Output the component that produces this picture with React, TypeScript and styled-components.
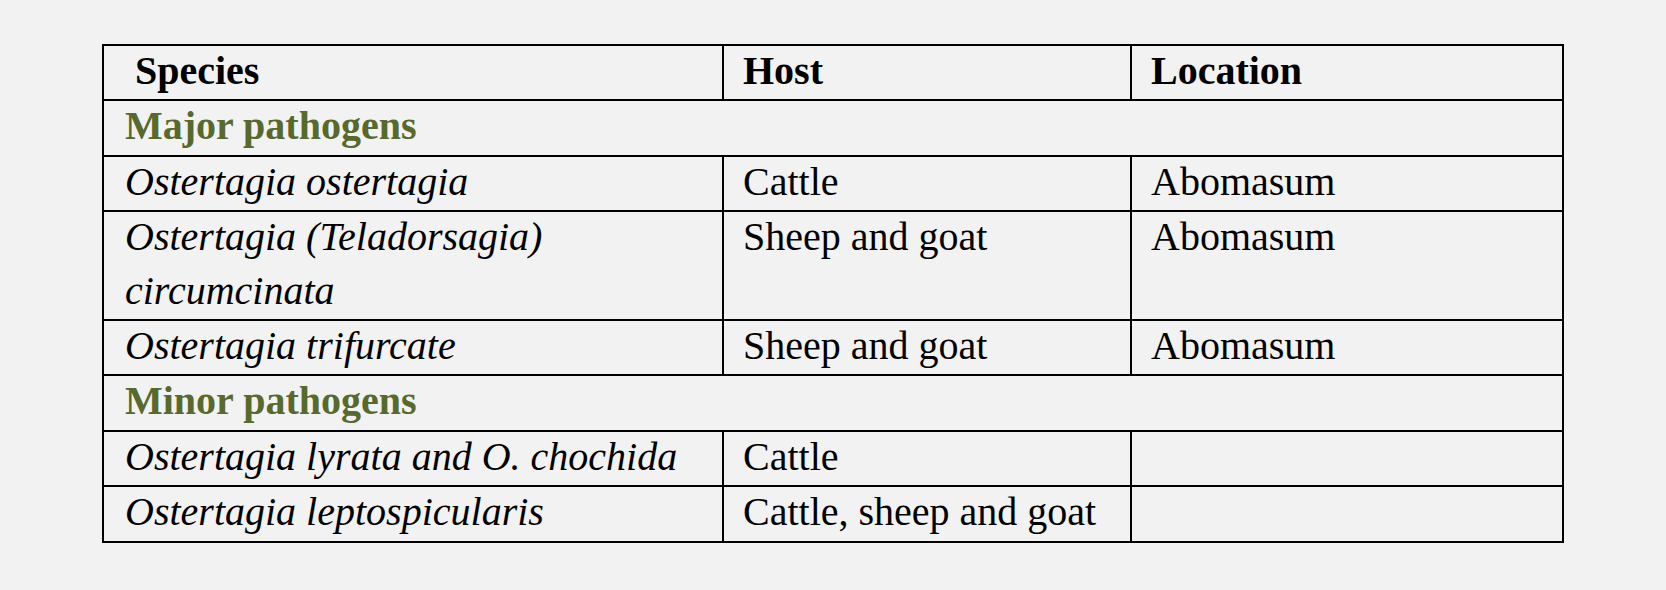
import styled, { createGlobalStyle } from 'styled-components';

interface SpeciesRow {
  species: string;
  host: string;
  location: string;
}

interface Section {
  title: string;
  rows: SpeciesRow[];
}

const sections: Section[] = [
  {
    title: 'Major pathogens',
    rows: [
      { species: 'Ostertagia ostertagia', host: 'Cattle', location: 'Abomasum' },
      { species: 'Ostertagia (Teladorsagia) circumcinata', host: 'Sheep and goat', location: 'Abomasum' },
      { species: 'Ostertagia trifurcate', host: 'Sheep and goat', location: 'Abomasum' },
    ],
  },
  {
    title: 'Minor pathogens',
    rows: [
      { species: 'Ostertagia lyrata and O. chochida', host: 'Cattle', location: '' },
      { species: 'Ostertagia leptospicularis', host: 'Cattle, sheep and goat', location: '' },
    ],
  },
];

const App = () => {
  return (
    <Page>
      <GlobalStyle />
      <Table>
        <colgroup>
          <col style={{ width: 620 }} />
          <col style={{ width: 408 }} />
          <col style={{ width: 432 }} />
        </colgroup>
        <thead>
          <tr>
            <HeadCell $first>
              <Text>Species</Text>
            </HeadCell>
            <HeadCell>
              <Text>Host</Text>
            </HeadCell>
            <HeadCell>
              <Text>Location</Text>
            </HeadCell>
          </tr>
        </thead>
        <tbody>
          {sections.map((section) => (
            <SectionRows key={section.title} section={section} />
          ))}
        </tbody>
      </Table>
    </Page>
  );
};

const SectionRows = ({ section }: { section: Section }) => (
  <>
    <tr>
      <SectionCell colSpan={3}>
        <Text>{section.title}</Text>
      </SectionCell>
    </tr>
    {section.rows.map((row) => (
      <tr key={row.species}>
        <SpeciesCell>
          <Text>{row.species}</Text>
        </SpeciesCell>
        <Cell>
          <Text>{row.host}</Text>
        </Cell>
        <Cell>
          <Text>{row.location}</Text>
        </Cell>
      </tr>
    ))}
  </>
);

export default App;

const GlobalStyle = createGlobalStyle`
  html, body {
    margin: 0;
    padding: 0;
    background: #f2f2f2;
  }
`;

const Page = styled.div`
  padding: 44px 0 0 102px;
  font-family: 'Liberation Serif', 'Times New Roman', serif;
  color: #000;
`;

const Table = styled.table`
  border-collapse: collapse;
  table-layout: fixed;
  width: 1462px;
  border: 2px solid #000;
`;

const BaseCell = styled.td`
  border: 2px solid #000;
  padding: 0 12px 0 19px;
  font-size: 40px;
  line-height: 53.4px;
  vertical-align: top;
  text-align: left;
`;

const Text = styled.div`
  margin: -2px 0 2px;
  min-height: 53.4px;
`;

const HeadCell = styled(BaseCell).attrs({ as: 'th' })<{ $first?: boolean }>`
  font-weight: bold;
  padding-left: ${(p) => (p.$first ? '31px' : '19px')};
`;

const SectionCell = styled(BaseCell)`
  font-weight: bold;
  color: #58692c;
  padding-left: 21px;
`;

const SpeciesCell = styled(BaseCell)`
  font-style: italic;
  padding-left: 21px;
`;

const Cell = styled(BaseCell)``;
